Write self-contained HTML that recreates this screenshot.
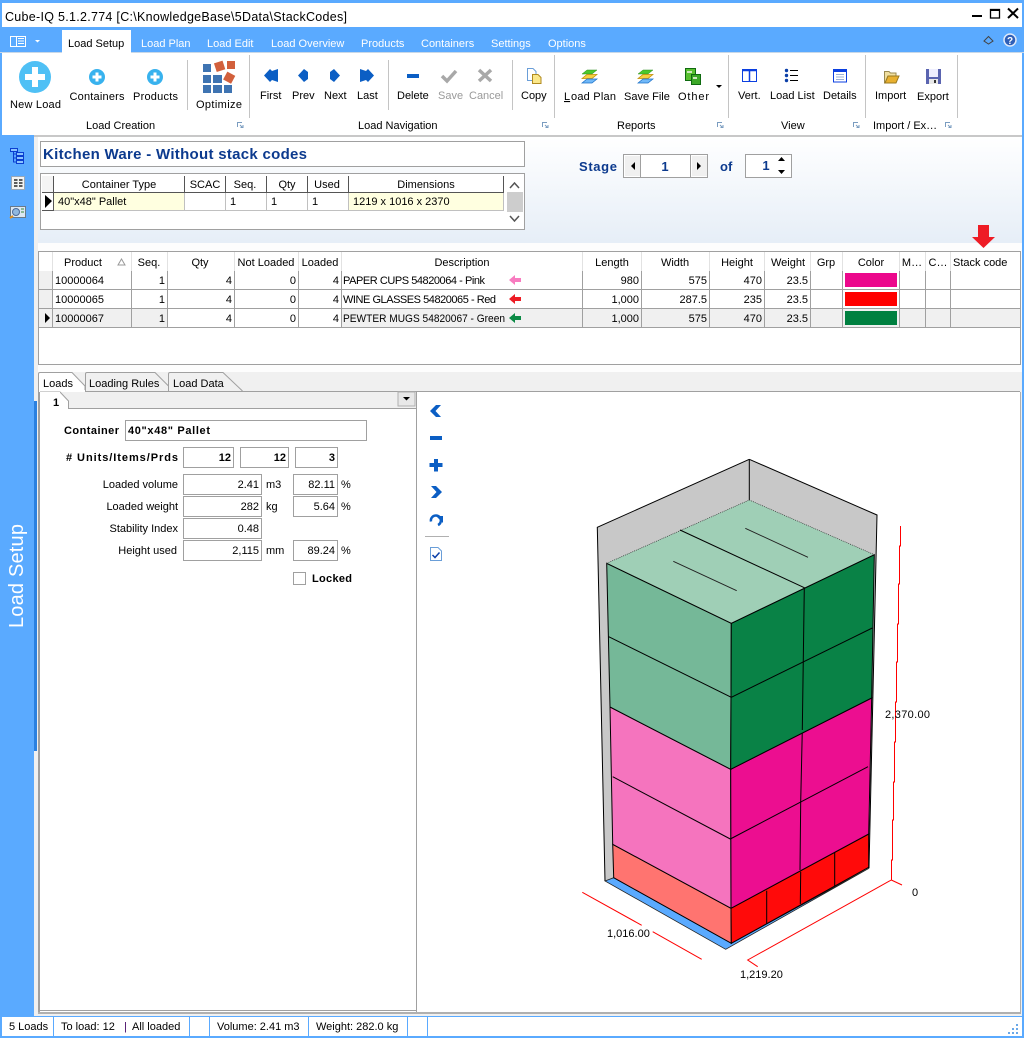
<!DOCTYPE html>
<html><head><meta charset="utf-8"><title>Cube-IQ</title>
<style>
html,body{margin:0;padding:0;background:#fff;width:1024px;height:1038px;overflow:hidden}
svg{display:block;font-family:"Liberation Sans",sans-serif;font-size:11px;fill:#000}
.c{text-anchor:middle}.e{text-anchor:end}.b{font-weight:bold}
.w{fill:#fff}.g{fill:#9a9a9a}
.r rect,.crisp{shape-rendering:crispEdges}
.box{fill:#fff;stroke:#a0a0a0;shape-rendering:crispEdges}
.k{stroke:#000;stroke-width:1;fill:none}
.ax{stroke:#f00;stroke-width:1;fill:none}
</style></head><body>
<svg width="1024" height="1038" viewBox="0 0 1024 1038" xmlns="http://www.w3.org/2000/svg">
<defs>
<linearGradient id="bg" x1="0" y1="0" x2="0" y2="1"><stop offset="0" stop-color="#fff"/><stop offset="1" stop-color="#e6eef7"/></linearGradient>
<g id="stack"><path d="M0 4 5 0H15L10 4Z" fill="#4cc82c" stroke="#2b8a1e" stroke-width=".5"/><path d="M0 8.500 5 4.500H15L10 8.500Z" fill="#f6d040" stroke="#c08a00" stroke-width=".7"/><path d="M0 13 5 9H15L10 13Z" fill="#70b8f8" stroke="#1a70c8" stroke-width=".7"/></g>
</defs>
<g class="r">
<rect width="1024" height="1038" fill="#5aaaff"/>
<rect x="2" y="3" width="1020" height="24" fill="#fff"/>
<rect x="2" y="53" width="1020" height="82" fill="#fff"/>
<rect x="0" y="52" width="1024" height="1" fill="#c8d8e8"/>
<rect x="34" y="135" width="988" height="882" fill="#f0f0f0"/>
<rect x="0" y="135" width="34" height="882" fill="#5aaaff"/>
<rect x="34" y="135" width="988" height="2" fill="#c8c8c8"/>
<rect x="34" y="401" width="3" height="350" fill="#2a80e0"/>
<rect x="38" y="137" width="984" height="106" fill="url(#bg)"/>
<rect x="38" y="243" width="984" height="129" fill="#fdfdfd"/>
<rect x="62" y="30" width="69" height="23" fill="#fff"/>
<rect x="2" y="1017" width="1020" height="19" fill="#fff"/>
<rect x="0" y="1016" width="1024" height="1" fill="#5aaaff"/>
</g>

<!-- Title bar -->
<text x="5" y="21" font-size="12.5" textLength="342" lengthAdjust="spacing">Cube-IQ  5.1.2.774  [C:\KnowledgeBase\5Data\StackCodes]</text>
<path d="M972 16h10" stroke="#000" stroke-width="2"/>
<rect x="990.5" y="9.5" width="9" height="8.500" fill="none" stroke="#000" stroke-width="1.300"/><path d="M990 10h10" stroke="#000" stroke-width="2"/>
<path d="M1008 8.500 1018 18M1018 8.500 1008 18" stroke="#000" stroke-width="2"/>

<!-- Tab strip -->
<rect x="10.5" y="36.5" width="15" height="10" fill="none" stroke="#fff"/><path d="M16.5 37v9M18 38.5h6M18 41h6M18 43.5h6" stroke="#fff"/><path d="M35 40h5l-2.500 2.500z" fill="#fff"/>
<text x="68" y="47">Load Setup</text>
<g class="w"><text x="141" y="47" fill="#fff">Load Plan</text><text x="207" y="47">Load Edit</text><text x="271" y="47">Load Overview</text><text x="361" y="47">Products</text><text x="421" y="47">Containers</text><text x="491" y="47">Settings</text><text x="548" y="47">Options</text></g>
<path d="M984 41 988.500 36.500 993 41 988.500 44Z" fill="none" stroke="#444"/>
<circle cx="1010" cy="40" r="6" fill="#2e5fb8" stroke="#dde8f8" stroke-width="1.500"/><text x="1010" y="44" class="c w b" font-size="10">?</text>

<!-- Ribbon: separators -->
<g class="r" fill="#c4c4c4"><rect x="187" y="60" width="1" height="50"/><rect x="249" y="55" width="1" height="63"/><rect x="388" y="60" width="1" height="50"/><rect x="512" y="60" width="1" height="50"/><rect x="554" y="55" width="1" height="63"/><rect x="728" y="55" width="1" height="63"/><rect x="865" y="55" width="1" height="63"/><rect x="957" y="55" width="1" height="63"/></g>

<!-- New Load, Containers, Products -->
<circle cx="35" cy="77" r="16" fill="#4fc0f5"/><path d="M35 67v20M25 77h20" stroke="#fff" stroke-width="6"/>
<circle cx="97" cy="77" r="8" fill="#38b2ee"/><path d="M97 72.500v9M92.500 77h9" stroke="#fff" stroke-width="3"/>
<circle cx="155" cy="77" r="8" fill="#38b2ee"/><path d="M155 72.500v9M150.500 77h9" stroke="#fff" stroke-width="3"/>
<text x="10" y="108" textLength="51">New Load</text><text x="69.500" y="100" textLength="55">Containers</text><text x="133" y="100" textLength="45">Products</text>

<!-- Optimize -->
<g fill="#3f74b2" class="r"><rect x="203" y="64" width="8" height="8"/><rect x="203" y="75" width="8" height="8"/><rect x="213" y="75" width="9" height="8"/><rect x="203" y="85" width="8" height="8"/><rect x="213" y="85" width="9" height="8"/><rect x="224" y="85" width="8" height="8"/></g>
<g fill="#d2603c"><rect x="215" y="62" width="9" height="9" transform="rotate(-18 219 66)"/><rect x="227" y="61" width="8" height="8"/><rect x="225" y="73" width="9" height="9" transform="rotate(28 229 77)"/></g>
<text x="196" y="108" textLength="46">Optimize</text>

<!-- Navigation -->
<g fill="#0b5ec4">
<path d="M264 75.500 270 69 272 71 278 69V82L272 80 270 82Z"/>
<path d="M298 75.500 304 69 308 72V79L304 82Z"/>
<path d="M330 72 334 69 340 75.500 334 82 330 79Z"/>
<path d="M360 69 366 71 368 69 374 75.500 368 82 366 80 360 82Z"/>
<rect x="407" y="74" width="12" height="4"/>
</g>
<path d="M442 76 447 81 456 71" fill="none" stroke="#a8a8a8" stroke-width="3.500"/>
<path d="M479 70 491 81M491 70 479 81" fill="none" stroke="#a8a8a8" stroke-width="3.500"/>
<text x="260" y="99">First</text><text x="292" y="99">Prev</text><text x="324" y="99">Next</text><text x="357" y="99">Last</text><text x="397" y="99">Delete</text>
<text x="438" y="99" class="g">Save</text><text x="469" y="99" class="g">Cancel</text>

<!-- Copy -->
<path d="M527.500 68.500H533L536 71.500V80.500H527.500Z" fill="#fff" stroke="#6a9ed8"/><path d="M532.500 74.500H538L541 77.500V83.500H532.500Z" fill="#fbe88a" stroke="#b08a20"/>
<text x="521" y="99">Copy</text>

<!-- Reports -->
<use href="#stack" x="582" y="70"/><use href="#stack" x="638" y="70"/>
<rect x="685.500" y="68.500" width="10" height="12" fill="#58c030" stroke="#0f6a10"/><rect x="691.500" y="74.500" width="9" height="10" fill="#3ca828" stroke="#0f6a10"/><path d="M687 71h5v2h-5zM693 77h4v2h-4z" fill="#cfe8c0"/>
<path d="M716 85h6l-3 3z"/>
<text x="564" y="100" style="text-decoration:underline" textLength="7">L</text><text x="571" y="100" textLength="45">oad Plan</text><text x="624" y="100">Save File</text><text x="678" y="100" textLength="31">Other</text>

<!-- View -->
<g fill="none" stroke="#0b3fe0"><rect x="742.500" y="69.500" width="14" height="12" stroke-width="1"/><path d="M749.500 69v13M742 70.500h15" stroke-width="1.500"/></g>
<g fill="#0b3fa8"><circle cx="786.500" cy="70.500" r="1.700"/><circle cx="786.500" cy="75.500" r="1.700"/><circle cx="786.500" cy="80.500" r="1.700"/></g><path d="M790 70.500h8M790 75.500h8M790 80.500h8" stroke="#000"/>
<rect x="833.500" y="69.500" width="13" height="12.500" fill="#fff" stroke="#0b3fe0"/><rect x="833" y="69" width="14" height="3" fill="#0b3fe0"/><path d="M836 74.500h8M836 77h8M836 79.500h8" stroke="#9ab0d8"/>
<text x="738" y="99">Vert.</text><text x="770" y="99">Load List</text><text x="823" y="99">Details</text>

<!-- Import/Export -->
<path d="M884.500 71.500H889L890.500 73H896V76H888L885 83H884.500Z" fill="#f0dfa0" stroke="#9a8a50"/><path d="M888 76H899L896 83H885Z" fill="#e8b030" stroke="#9a7a20"/>
<rect x="926" y="69" width="15" height="15" fill="#5a64b0"/><rect x="929" y="69" width="9" height="8" fill="#eef"/><rect x="929" y="79" width="9" height="5" fill="#e8e8e8"/><rect x="934" y="80" width="2" height="3" fill="#333"/>
<text x="875" y="99">Import</text><text x="917" y="100">Export</text>

<!-- Group labels -->
<text x="86" y="129">Load Creation</text><text x="358" y="129">Load Navigation</text><text x="617" y="129">Reports</text><text x="781" y="129">View</text><text x="873" y="129">Import / Ex…</text>
<g fill="none" stroke="#7a9cc0"><path d="M237.500 127V122.500H242M240 125l2.500 2.500M240.500 127.500h2.500V125"/><path d="M542.500 127V122.500H547M545 125l2.500 2.500M545.500 127.500h2.500V125"/><path d="M717.500 127V122.500H722M720 125l2.500 2.500M720.500 127.500h2.500V125"/><path d="M853.500 127V122.500H858M856 125l2.500 2.500M856.500 127.500h2.500V125"/><path d="M945.500 127V122.500H950M948 125l2.500 2.500M948.500 127.500h2.500V125"/></g>

<!-- Sidebar -->
<g fill="#8cc4ff" stroke="#0b3fd0"><rect x="10.500" y="148.500" width="7" height="3"/><rect x="16.500" y="152.500" width="7" height="3"/><rect x="16.500" y="156.500" width="7" height="3"/><rect x="16.500" y="160.500" width="7" height="3"/></g><path d="M13.500 151v11h3M13.500 154h3M13.500 158h3" fill="none" stroke="#0b3fd0"/>
<rect x="11.500" y="176.500" width="13" height="13" fill="#f4f4f4" stroke="#9aa8b8"/><path d="M14 180h3.500M14 183h3.500M14 186h3.500M19 180h3.500M19 183h3.500M19 186h3.500" stroke="#000" stroke-width="1.300"/>
<rect x="10.500" y="206.500" width="15" height="11" fill="#dce8f4" stroke="#6a7a8a"/><circle cx="16" cy="212" r="3.500" fill="#90b8e0" stroke="#4a6a9a"/><path d="M21 209h3M21 212h3" stroke="#3a8a3a"/><path d="M10 218l3-2" stroke="#e09020" stroke-width="2"/>
<text transform="translate(23 628) rotate(-90)" font-size="20" class="w" textLength="104">Load Setup</text>

<!-- Title box & upper grid -->
<rect class="box" x="40.500" y="141.500" width="484" height="25"/>
<text x="43" y="159" class="b" font-size="15" fill="#0c3a8e" textLength="264">Kitchen Ware - Without stack codes</text>
<rect class="box" x="40.500" y="173.500" width="484" height="56"/>
<g class="r"><rect x="42" y="176" width="462" height="17" fill="#f4f4f4"/><rect x="54" y="176" width="450" height="17" fill="#fff"/><rect x="54" y="193" width="450" height="17" fill="#ffffe0"/><rect x="42" y="192" width="462" height="1" fill="#555"/>
<rect x="53" y="176" width="1" height="34" fill="#555"/><rect x="184" y="176" width="1" height="17" fill="#555"/><rect x="225" y="176" width="1" height="17" fill="#555"/><rect x="266" y="176" width="1" height="17" fill="#555"/><rect x="307" y="176" width="1" height="17" fill="#555"/><rect x="348" y="176" width="1" height="17" fill="#555"/><rect x="503" y="176" width="1" height="17" fill="#555"/>
<rect x="185" y="193" width="40" height="17" fill="#fff"/><rect x="226" y="193" width="40" height="17" fill="#fff"/><rect x="267" y="193" width="40" height="17" fill="#fff"/><rect x="308" y="193" width="40" height="17" fill="#fff"/>
<rect x="184" y="193" width="1" height="17" fill="#c0c0c0"/><rect x="225" y="193" width="1" height="17" fill="#c0c0c0"/><rect x="266" y="193" width="1" height="17" fill="#c0c0c0"/><rect x="307" y="193" width="1" height="17" fill="#c0c0c0"/><rect x="348" y="193" width="1" height="17" fill="#c0c0c0"/><rect x="503" y="193" width="1" height="17" fill="#c0c0c0"/><rect x="54" y="210" width="450" height="1" fill="#c0c0c0"/><rect x="42" y="210" width="12" height="1" fill="#555"/>
<rect x="507" y="192" width="16" height="20" fill="#cdcdcd"/></g>
<path d="M45 195 52 201 45 208Z"/>
<path d="M510 188l4.500-5 4.500 5M510 216l4.500 5 4.500-5" fill="none" stroke="#555" stroke-width="1.500"/>
<g class="c"><text x="119" y="188">Container Type</text><text x="205" y="188">SCAC</text><text x="245" y="188">Seq.</text><text x="287" y="188">Qty</text><text x="327" y="188">Used</text><text x="426" y="188">Dimensions</text></g>
<text x="58" y="205">40"x48" Pallet</text><text x="230" y="205">1</text><text x="271" y="205">1</text><text x="312" y="205">1</text><text x="353" y="205">1219 x 1016 x 2370</text>

<!-- Stage -->
<text x="579" y="171" class="b" font-size="13" fill="#0c3a8e" textLength="38">Stage</text>
<rect class="box" x="623.500" y="154.500" width="84" height="23"/>
<rect class="crisp" x="625" y="156" width="15" height="20" fill="#f0f0f0"/><rect class="crisp" x="692" y="156" width="15" height="20" fill="#f0f0f0"/>
<path d="M640.500 155v22M690.500 155v22" stroke="#a0a0a0"/>
<path d="M635 162v8l-4-4zM697 162v8l4-4z"/>
<text x="665" y="171" class="c b" font-size="13" fill="#0c3a8e">1</text>
<text x="720" y="171" class="b" font-size="13" fill="#0c3a8e">of</text>
<rect class="box" x="745.500" y="154.500" width="46" height="23"/>
<text x="766" y="170" class="c b" font-size="13" fill="#0c3a8e">1</text>
<path d="M781.500 157l-3.500 4h7zM781.500 174l-3.500-4h7z"/>
<path d="M978 225H989V237H995L983.500 248 972 237H978Z" fill="#ee1c25"/>

<!-- Product grid -->
<rect class="box" x="38.500" y="251.500" width="982" height="113"/>
<g class="r">
<rect x="39" y="271" width="13" height="57" fill="#f0f0f0"/>
<rect x="52" y="309" width="968" height="18" fill="#f0f0f0"/>
<rect x="168" y="309" width="174" height="18" fill="#fff"/>
</g>
<g class="r" fill="#e2e2e2"><rect x="52" y="252" width="1" height="19"/><rect x="131" y="252" width="1" height="19"/><rect x="167" y="252" width="1" height="19"/><rect x="234" y="252" width="1" height="19"/><rect x="298" y="252" width="1" height="19"/><rect x="341" y="252" width="1" height="19"/><rect x="582" y="252" width="1" height="19"/><rect x="641" y="252" width="1" height="19"/><rect x="709" y="252" width="1" height="19"/><rect x="764" y="252" width="1" height="19"/><rect x="810" y="252" width="1" height="19"/><rect x="842" y="252" width="1" height="19"/><rect x="899" y="252" width="1" height="19"/><rect x="925" y="252" width="1" height="19"/><rect x="950" y="252" width="1" height="19"/></g>
<g class="r" fill="#a0a0a0"><rect x="52" y="271" width="1" height="57"/><rect x="131" y="271" width="1" height="57"/><rect x="167" y="271" width="1" height="57"/><rect x="234" y="271" width="1" height="57"/><rect x="298" y="271" width="1" height="57"/><rect x="341" y="271" width="1" height="57"/><rect x="582" y="271" width="1" height="57"/><rect x="641" y="271" width="1" height="57"/><rect x="709" y="271" width="1" height="57"/><rect x="764" y="271" width="1" height="57"/><rect x="810" y="271" width="1" height="57"/><rect x="842" y="271" width="1" height="57"/><rect x="899" y="271" width="1" height="57"/><rect x="925" y="271" width="1" height="57"/><rect x="950" y="271" width="1" height="57"/><rect x="39" y="289" width="981" height="1"/><rect x="39" y="308" width="981" height="1"/><rect x="39" y="327" width="981" height="1"/></g>
<g class="c"><text x="83" y="266">Product</text><text x="149" y="266">Seq.</text><text x="200" y="266">Qty</text><text x="266" y="266">Not Loaded</text><text x="320" y="266">Loaded</text><text x="462" y="266">Description</text><text x="612" y="266">Length</text><text x="675" y="266">Width</text><text x="737" y="266">Height</text><text x="788" y="266">Weight</text><text x="826" y="266">Grp</text><text x="871" y="266">Color</text><text x="912" y="266">M…</text><text x="938" y="266">C…</text></g>
<text x="953" y="266">Stack code</text>
<path d="M121.500 259l-3.500 6h7z" fill="none" stroke="#999"/>
<g><text x="55" y="284">10000064</text><text x="55" y="303">10000065</text><text x="55" y="322">10000067</text>
<text x="343" y="284" textLength="142">PAPER CUPS 54820064 - Pink</text><text x="343" y="303" textLength="153">WINE GLASSES 54820065 - Red</text><text x="343" y="322" textLength="162" lengthAdjust="spacingAndGlyphs">PEWTER MUGS 54820067 - Green</text></g>
<g class="e">
<text x="165" y="284">1</text><text x="165" y="303">1</text><text x="165" y="322">1</text>
<text x="232" y="284">4</text><text x="232" y="303">4</text><text x="232" y="322">4</text>
<text x="296" y="284">0</text><text x="296" y="303">0</text><text x="296" y="322">0</text>
<text x="339" y="284">4</text><text x="339" y="303">4</text><text x="339" y="322">4</text>
<text x="639" y="284">980</text><text x="639" y="303">1,000</text><text x="639" y="322">1,000</text>
<text x="707" y="284">575</text><text x="707" y="303">287.5</text><text x="707" y="322">575</text>
<text x="762" y="284">470</text><text x="762" y="303">235</text><text x="762" y="322">470</text>
<text x="808" y="284">23.5</text><text x="808" y="303">23.5</text><text x="808" y="322">23.5</text>
</g>
<path d="M509 280 515 275V278H521V282H515V285Z" fill="#f87cc0"/>
<path d="M509 299 515 294V297H521V301H515V304Z" fill="#ed1c24"/>
<path d="M509 318 515 313V316H521V320H515V323Z" fill="#0b8a45"/>
<path d="M45 313 50 318 45 323Z"/>
<g class="r"><rect x="845" y="273" width="52" height="14" fill="#ec088c"/><rect x="845" y="292" width="52" height="14" fill="#f00"/><rect x="845" y="311" width="52" height="14" fill="#008040"/></g>

<!-- Lower tabs -->
<rect class="crisp" x="38" y="391" width="982" height="1" fill="#a0a0a0"/>
<path d="M38.500 392V374Q38.500 372.500 40 372.500H72L85 386V392Z" fill="#fff" stroke="#a0a0a0"/>
<path d="M85.500 391V374Q85.500 372.500 87 372.500H155L168.500 386V391" fill="#f0f0f0" stroke="#a0a0a0"/>
<path d="M168.500 391V374Q168.500 372.500 170 372.500H223L242.500 391" fill="#f0f0f0" stroke="#a0a0a0"/>
<rect class="crisp" x="39" y="390" width="46" height="3" fill="#fff"/>
<text x="43" y="387">Loads</text><text x="89" y="387">Loading Rules</text><text x="173" y="387">Load Data</text>

<!-- Lower body -->
<rect class="crisp" x="38" y="392" width="982" height="622" fill="#fff"/>
<rect class="crisp" x="38" y="392" width="2" height="622" fill="#a0a0a0"/>
<rect class="crisp" x="1020" y="392" width="1" height="622" fill="#b0b0b0"/>
<rect class="crisp" x="38" y="1012" width="983" height="2" fill="#b0b0b0"/>
<rect class="crisp" x="40" y="392" width="377" height="16" fill="#f0f0f0"/>
<rect class="crisp" x="416" y="392" width="1" height="620" fill="#a0a0a0"/>
<rect class="crisp" x="68" y="408" width="349" height="1" fill="#a0a0a0"/>
<rect class="crisp" x="40" y="1010" width="377" height="1" fill="#a0a0a0"/>
<path d="M40 392H60L68.500 401V408.500" fill="#fff" stroke="#a0a0a0"/>
<rect class="crisp" x="40" y="392" width="20" height="18" fill="#fff"/><rect class="crisp" x="60" y="401" width="8" height="9" fill="#fff"/>
<text x="53" y="406" class="b">1</text>
<rect class="crisp" x="398" y="392" width="17" height="14" fill="#e8e8e8" stroke="#b0b0b0"/><path d="M403 397h7l-3.500 3.500z"/>

<!-- Form -->
<text x="64" y="434" class="b" textLength="55">Container</text>
<rect class="box" x="125.500" y="420.500" width="241" height="20"/><text x="128" y="434" class="b" textLength="82">40"x48" Pallet</text>
<text x="66" y="461" class="b" textLength="112"># Units/Items/Prds</text>
<rect class="box" x="183.500" y="447.500" width="50" height="20"/><rect class="box" x="240.500" y="447.500" width="48" height="20"/><rect class="box" x="295.500" y="447.500" width="42" height="20"/>
<g class="e b"><text x="231" y="461">12</text><text x="286" y="461">12</text><text x="335" y="461">3</text></g>
<g class="e"><text x="178" y="488">Loaded volume</text><text x="178" y="510">Loaded weight</text><text x="178" y="532">Stability Index</text><text x="177" y="554">Height used</text></g>
<rect class="box" x="183.500" y="474.500" width="78" height="20"/><rect class="box" x="183.500" y="496.500" width="78" height="20"/><rect class="box" x="183.500" y="518.500" width="78" height="20"/><rect class="box" x="183.500" y="540.500" width="78" height="20"/>
<rect class="box" x="293.500" y="474.500" width="44" height="20"/><rect class="box" x="293.500" y="496.500" width="44" height="20"/><rect class="box" x="293.500" y="540.500" width="44" height="20"/>
<g class="e"><text x="259" y="488">2.41</text><text x="259" y="510">282</text><text x="259" y="532">0.48</text><text x="259" y="554">2,115</text><text x="335" y="488">82.11</text><text x="335" y="510">5.64</text><text x="335" y="554">89.24</text></g>
<text x="266" y="488">m3</text><text x="266" y="510">kg</text><text x="266" y="554">mm</text>
<text x="341" y="488">%</text><text x="341" y="510">%</text><text x="341" y="554">%</text>
<rect class="box" x="293.500" y="572.500" width="12" height="12"/>
<text x="312" y="582" class="b" textLength="40">Locked</text>

<!-- Right toolbar -->
<g fill="#0b5ec4">
<path d="M436 405H441L435.500 411 441 417H436L430 411Z"/>
<rect x="430" y="436" width="12" height="4"/>
<path d="M434 459h4v4h4.500v4H438v4.500h-4V467h-4.500v-4H434Z"/>
<path d="M431 486h5l6 6-6 6h-5l5.500-6Z"/>
</g>
<path d="M431 521.500A5 5 0 1 1 438 525" fill="none" stroke="#0b5ec4" stroke-width="2.500"/><path d="M436 516h7v7Z" fill="#0b5ec4"/>
<rect class="crisp" x="425" y="536" width="24" height="1" fill="#b0b0b0"/>
<path d="M430.500 547.500H438L441.500 551V560.500H430.500Z" fill="#fff" stroke="#6a9ed8"/><path d="M432.500 555 435 557.500 439.500 552.500" fill="none" stroke="#0b3fa8" stroke-width="1.500"/>

<!-- 3D view -->
<path d="M749.300 459.300 597.300 527.300 605 881 725.700 949.300 869 868.300 877 515Z" fill="#c8c8c8"/>
<path d="M749.300 459.300 597.300 527.300 605 881M749.300 459.300 877 515 869 868.300M749.300 459.300V500" class="k"/>
<path d="M605 881 613.700 877.700 731.300 943.300 869 868.300 725.700 949.300Z" fill="#5aaaff" stroke="#222" stroke-width=".8"/>
<!-- red base -->
<path d="M612.700 844.300 731 908.300 731.300 943.300 613.700 877.700Z" fill="#ff7470" stroke="#000"/>
<path d="M731 908.300 868.700 834 868.700 867.300 731.300 943.300Z" fill="#ff0a0a" stroke="#000"/>
<path d="M766.700 890.700V924M800.700 871.700 800.300 904M834.700 852.300V886" class="k"/>
<!-- pink -->
<path d="M610 707 730.700 769.300 731 908.300 612.700 844.300Z" fill="#f574be" stroke="#000"/>
<path d="M730.700 769.300 871.700 698 868.700 834 731 908.300Z" fill="#ec0e90" stroke="#000"/>
<path d="M612.700 776.700 730.300 839 868 766.700" class="k"/>
<path d="M802.300 730 800.700 801.700 800 870" class="k"/>
<!-- green -->
<path d="M606.700 563.300 731.300 623.300 730.700 769.300 610 707Z" fill="#75b898" stroke="#000"/>
<path d="M731.300 623.300 874.300 554.700 871.700 698 730.700 769.300Z" fill="#098246" stroke="#000"/>
<path d="M749.300 500 606.700 563.300 731.300 623.300 874.300 554.700Z" fill="#9fcfb6"/>
<path d="M606.700 563.300 731.300 623.300 874.300 554.700" class="k"/>
<path d="M606.700 563.300 749.300 500 874.300 554.700" fill="none" stroke="#333" stroke-width=".7" stroke-dasharray="1 1"/>
<path d="M680 530 804.300 587.700 802.300 730" class="k"/>
<path d="M673.300 561.300 736.700 590.700M745.300 528.300 808 557.300" fill="none" stroke="#222" stroke-width=".9"/>
<path d="M608.700 636.700 731.300 697.300 872.300 628" class="k"/>
<!-- axes -->
<path class="ax crisp" d="M900.500 526V546H899.500V584H898.500V624H897.500V662H896.500V702H895.500V742H894.500V782H893.500V820H892.500V860H891.500V880"/>
<path class="ax" d="M891.300 880 902 885M891.300 880 747.700 960 757.700 966.700M582.300 892.300 641.700 925.300M652.700 931.700 701.700 959.300"/>
<text x="885" y="718" textLength="45">2,370.00</text><text x="912" y="896">0</text><text x="607" y="937">1,016.00</text><text x="740" y="978">1,219.20</text>

<!-- Status bar -->
<g class="r" fill="#5aaaff"><rect x="53" y="1017" width="1" height="19"/><rect x="189" y="1017" width="1" height="19"/><rect x="209" y="1017" width="1" height="19"/><rect x="308" y="1017" width="1" height="19"/><rect x="407" y="1017" width="1" height="19"/><rect x="427" y="1017" width="1" height="19"/></g>
<text x="9" y="1030">5 Loads</text><text x="61" y="1030">To load: 12</text><text x="124" y="1030" fill="#400060">|</text><text x="132" y="1030">All loaded</text><text x="217" y="1030">Volume: 2.41 m3</text><text x="316" y="1030">Weight: 282.0 kg</text>
<g fill="#6aa8e8" class="r"><rect x="1016" y="1024" width="2" height="2"/><rect x="1012" y="1028" width="2" height="2"/><rect x="1016" y="1028" width="2" height="2"/><rect x="1008" y="1032" width="2" height="2"/><rect x="1012" y="1032" width="2" height="2"/><rect x="1016" y="1032" width="2" height="2"/></g>
</svg>
</body></html>
